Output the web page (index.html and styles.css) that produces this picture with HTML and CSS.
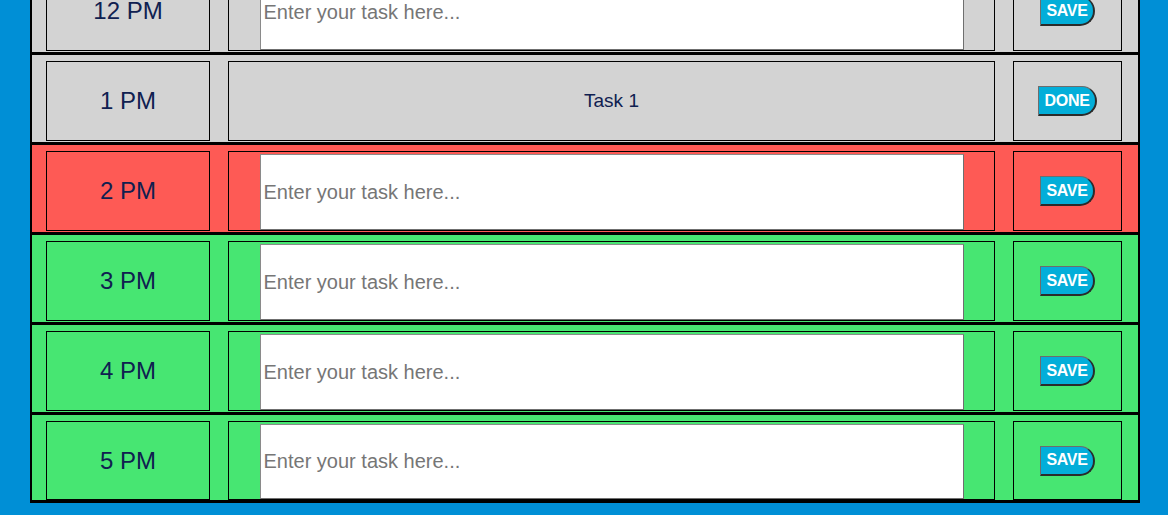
FILE: index.html
```html
<!DOCTYPE html>
<html>
<head>
<meta charset="utf-8">
<title>Work Day Scheduler</title>
<link rel="stylesheet" href="styles.css">
</head>
<body>
<main class="planner">
  <div class="row past">
    <div class="hour">12 PM</div>
    <div class="task"><input class="task-input" type="text" placeholder="Enter your task here..."></div>
    <div class="action"><button class="btn">SAVE</button></div>
  </div>
  <div class="row past">
    <div class="hour">1 PM</div>
    <div class="task"><span class="task-text">Task 1</span></div>
    <div class="action"><button class="btn">DONE</button></div>
  </div>
  <div class="row present">
    <div class="hour">2 PM</div>
    <div class="task"><input class="task-input" type="text" placeholder="Enter your task here..."></div>
    <div class="action"><button class="btn">SAVE</button></div>
  </div>
  <div class="row future">
    <div class="hour">3 PM</div>
    <div class="task"><input class="task-input" type="text" placeholder="Enter your task here..."></div>
    <div class="action"><button class="btn">SAVE</button></div>
  </div>
  <div class="row future">
    <div class="hour">4 PM</div>
    <div class="task"><input class="task-input" type="text" placeholder="Enter your task here..."></div>
    <div class="action"><button class="btn">SAVE</button></div>
  </div>
  <div class="row future">
    <div class="hour">5 PM</div>
    <div class="task"><input class="task-input" type="text" placeholder="Enter your task here..."></div>
    <div class="action"><button class="btn">SAVE</button></div>
  </div>
</main>
</body>
</html>
```
FILE: styles.css
```css
html, body {
  margin: 0;
  padding: 0;
  background: #008fd6;
  font-family: "Liberation Sans", Arial, Helvetica, sans-serif;
  overflow: hidden;
}

.planner {
  box-sizing: border-box;
  width: 1110px;
  margin: -38px 0 0 30px;
  border-left: 2px solid #000;
  border-right: 2px solid #000;
  border-bottom: 3px solid #000;
}

.row {
  display: grid;
  grid-template-columns: 164px 767px 109px;
  column-gap: 18px;
  align-items: start;
  padding: 6px 0 0 14px;
  box-sizing: content-box;
  border-top: 3px solid #000;
  height: 81px;
}

.row:last-child {
  height: 79px;
}

.past { background: #d3d3d3; }
.present { background: #fe5a55; }
.future { background: #47e672; }

.hour,
.task,
.action {
  box-sizing: border-box;
  height: 80px;
  border: 1px solid #000;
  display: flex;
  align-items: center;
  justify-content: center;
}

.row:last-child .hour,
.row:last-child .task,
.row:last-child .action {
  height: 79px;
}

.hour {
  font-size: 24px;
  color: #0f2050;
}

.task {
  align-items: flex-end;
}

.task-text {
  align-self: center;
  font-size: 19px;
  color: #0f2050;
}

.task-input {
  box-sizing: border-box;
  width: 704px;
  height: 76px;
  margin: 0;
  padding: 0 3px;
  border: 1px solid #8a8a8a;
  border-right-color: #6f6f6f;
  border-bottom-color: #6f6f6f;
  background: #fff;
  font-family: "Liberation Sans", Arial, Helvetica, sans-serif;
  font-size: 20px;
  color: #333;
}

.row:last-child .task-input {
  height: 75px;
}

.task-input::placeholder {
  color: #767676;
}

.btn {
  box-sizing: border-box;
  height: 30px;
  padding: 0 5px;
  margin: 0;
  background: #03aed9;
  color: #fff;
  font-family: "Liberation Sans", Arial, Helvetica, sans-serif;
  font-weight: bold;
  font-size: 16px;
  letter-spacing: -0.3px;
  border-style: solid;
  border-width: 1px 2px 2px 1px;
  border-color: #6d6d6d #2b2b2b #2b2b2b #6d6d6d;
  border-radius: 0 15px 15px 0;
}
```
